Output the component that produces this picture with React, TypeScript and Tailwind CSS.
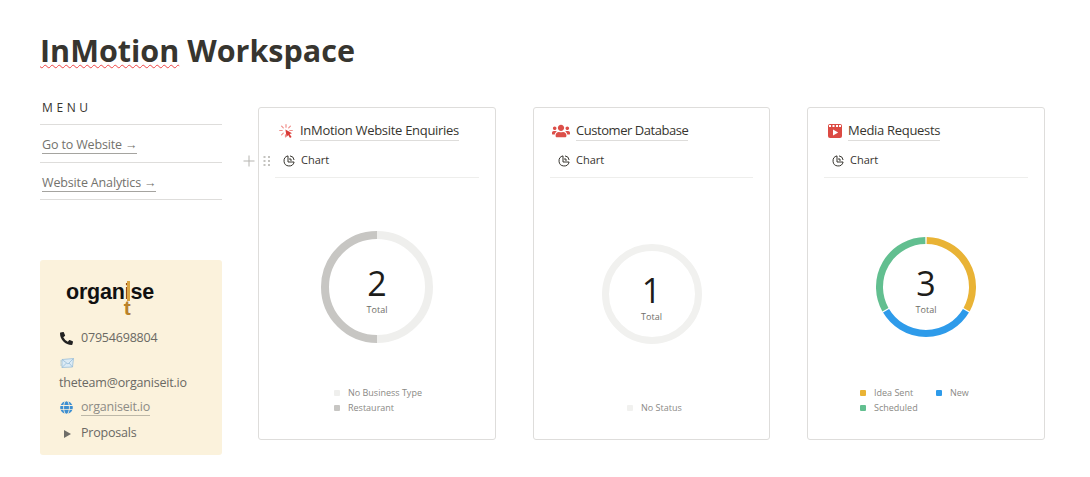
import { FaGlobe, FaPhoneAlt, FaUsers } from "react-icons/fa";

const FONT = "font-['Open_Sans','Noto_Sans',sans-serif]";

interface Slice {
  label: string;
  color: string;
  from: number;
  to: number;
}

interface DonutProps {
  size: number;
  stroke: number;
  total: number;
  slices: Slice[];
}

function polar(c: number, r: number, deg: number) {
  const a = ((deg - 90) * Math.PI) / 180;
  return `${c + r * Math.cos(a)} ${c + r * Math.sin(a)}`;
}

function Donut({ size, stroke, total, slices }: DonutProps) {
  const c = size / 2;
  const r = c - stroke / 2;

  return (
    <div className="relative shrink-0" style={{ width: size, height: size }}>
      <svg width={size} height={size} viewBox={`0 0 ${size} ${size}`}>
        {slices.map((s) =>
          s.to - s.from >= 360 ? (
            <circle key={s.label} cx={c} cy={c} r={r} fill="none" stroke={s.color} strokeWidth={stroke} />
          ) : (
            <path
              key={s.label}
              d={`M ${polar(c, r, s.from)} A ${r} ${r} 0 ${s.to - s.from > 180 ? 1 : 0} 1 ${polar(c, r, s.to)}`}
              fill="none"
              stroke={s.color}
              strokeWidth={stroke}
            />
          ),
        )}
      </svg>
      <div className="absolute inset-0 flex flex-col items-center justify-center pt-[7px]">
        <span className="text-[34px] leading-[34px] text-[#1d1d1b]">{total}</span>
        <span className="mt-[4px] text-[9px] leading-[12px] text-[#6f6e69]">Total</span>
      </div>
    </div>
  );
}

function ChartIcon() {
  return (
    <svg width="12" height="12" viewBox="0 0 12 12" fill="none" stroke="#37352f" strokeWidth="1" className="shrink-0">
      <path d="M5 .9A5.1 5.1 0 1 0 11.1 7H5Z" />
      <path d="M7 .9A4.6 4.6 0 0 1 11.1 5" />
      <path d="M7 3V5H9" />
    </svg>
  );
}

function ClickIcon() {
  return (
    <svg width="15" height="15" viewBox="0 0 15 15" className="shrink-0">
      <g stroke="#f08e8a" strokeWidth="1.2" strokeLinecap="round">
        <path d="M7 .7V3.2" />
        <path d="M.7 6.5H3.2" />
        <path d="M2.6 2.2 4.3 3.9" />
        <path d="M11.4 2.2 9.7 3.9" />
        <path d="M2.6 10.8 4.3 9.1" />
        <path d="M10.8 6.5H13.3" />
        <path d="M6.5 10.8V13" />
      </g>
      <path d="M6.4 5.6 13 9.2 10.6 10 12.6 13 11 14 9.2 11 7.6 13Z" fill="#d93a36" />
    </svg>
  );
}

function MediaIcon() {
  return (
    <svg width="14" height="14" viewBox="0 0 14 14" className="shrink-0">
      <rect width="14" height="14" rx="2" fill="#dc4a43" />
      <path d="M1 1h2v2H1zM4.5 1h2v2h-2zM8 1h2v2H8zM11 1h2v2h-2z" fill="#fff" />
      <path d="M5 5.5 10.2 8.5 5 11.5Z" fill="#fff" />
    </svg>
  );
}

function EnvelopeIcon() {
  return (
    <svg width="14" height="10" viewBox="0 0 14 10" className="shrink-0">
      <path d="M2 1.5 13.5 .5 12.5 9 2 9.5Z" fill="#dcebf5" stroke="#8fb8d6" strokeWidth=".7" />
      <path d="M2 1.5 8 6 13.5 .5M2 9.5 6.5 5M12.5 9 9 5" fill="none" stroke="#8fb8d6" strokeWidth=".7" />
      <path d="M0 3h2M0 5h1.5M0 7h2" stroke="#8fb8d6" strokeWidth=".6" />
    </svg>
  );
}

function Logo() {
  return (
    <div className="relative h-[37px] pl-[26px] pt-[20px] font-['Liberation_Sans',Arial,sans-serif] text-[21.5px] leading-[24px] font-bold text-[#111]">
      <span>organ</span>
      <span className="relative">
        i
        <span className="absolute left-[2px] top-[1px] h-[20px] w-[3px] bg-[#d9a441]"></span>
        <span className="absolute left-[-1px] top-[17px] text-[21px] leading-[22px] text-[#b9822a]">t</span>
      </span>
      <span>se</span>
    </div>
  );
}

interface CardProps {
  icon: React.ReactNode;
  title: string;
  titleClass: string;
  size: number;
  stroke: number;
  total: number;
  slices: Slice[];
  legend: React.ReactNode;
  chartClass: string;
  hover?: boolean;
}

function LegendItem({ slice }: { slice: Slice }) {
  return (
    <div className="flex h-[15px] items-center gap-[8px] whitespace-nowrap">
      <span className="h-[6px] w-[6px] rounded-[1px]" style={{ backgroundColor: slice.color }}></span>
      <span>{slice.label}</span>
    </div>
  );
}

function ChartCard({ icon, title, titleClass, size, stroke, total, slices, legend, chartClass, hover }: CardProps) {
  return (
    <section className="relative flex h-[333px] flex-col rounded-[3px] border border-[#dedddb] bg-white px-[16px]">
      {hover ? (
        <div className="absolute left-[-16px] top-[47px]">
          <svg width="12" height="12" viewBox="0 0 12 12" stroke="#b5b4b0" strokeWidth="1" className="absolute left-0 top-0">
            <path d="M6 .5v11M.5 6h11" />
          </svg>
          <svg width="8" height="12" viewBox="0 0 8 12" fill="#c4c3bf" className="absolute left-[20px] top-0">
            <rect x="0.5" y="1" width="2" height="2" />
            <rect x="5" y="1" width="2" height="2" />
            <rect x="0.5" y="5" width="2" height="2" />
            <rect x="5" y="5" width="2" height="2" />
            <rect x="0.5" y="9" width="2" height="2" />
            <rect x="5" y="9" width="2" height="2" />
          </svg>
        </div>
      ) : null}
      <div className="mt-[11px] flex h-[24px] items-center gap-[6px] pl-[4px]">
        {icon}
        <span className={`border-b border-[#dedddb] text-[13px] leading-[19px] font-[500] text-[#37352f] ${titleClass}`}>{title}</span>
      </div>
      <div className="flex h-[35px] items-center gap-[6px] border-b border-[#eeeeec] pl-[8px] pt-[1px] text-[11px] text-[#37352f]">
        <ChartIcon />
        <span>Chart</span>
      </div>
      <div className="flex min-h-0 flex-1 flex-col items-center">
        <div className={`flex items-center ${chartClass}`}>
          <Donut size={size} stroke={stroke} total={total} slices={slices} />
        </div>
        <div className="h-[42px] w-full text-[9px] text-[#8a8985]">{legend}</div>
      </div>
    </section>
  );
}

const businessSlices: Slice[] = [
  { label: "No Business Type", color: "#efefed", from: 0, to: 180 },
  { label: "Restaurant", color: "#c7c6c3", from: 180, to: 360 },
];
const statusSlices: Slice[] = [{ label: "No Status", color: "#f1f1ef", from: 0, to: 360 }];
const mediaSlices: Slice[] = [
  { label: "Idea Sent", color: "#e9b335", from: 0.8, to: 119.2 },
  { label: "New", color: "#2e9bea", from: 120.8, to: 239.2 },
  { label: "Scheduled", color: "#62bf90", from: 240.8, to: 359.2 },
];

export default function App() {
  return (
    <div className={`h-[477px] w-[1090px] overflow-hidden bg-white pl-[40px] pr-[45px] pt-[29px] ${FONT}`}>
      <h1 className="whitespace-nowrap text-[30.5px] leading-[42px] font-bold text-[#37352f]">
        <span className="underline decoration-[#ef4444] decoration-wavy decoration-1 underline-offset-[2px]">InMotion</span> Workspace
      </h1>
      <div className="mt-[36px] grid grid-cols-[181px_238px_237px_238px] gap-x-[37px]">
        <aside className="-mt-[8px] flex w-[182px] flex-col">
          <div className="box-content h-[18px] border-b border-[#dedddb] pb-[7px] pl-[2px] text-[12px] leading-[18px] tracking-[0.3em] text-[#37352f]">MENU</div>
          <div className="flex h-[38px] items-center border-b border-[#dedddb] pl-[2px] pt-[3px] text-[12.5px] tracking-[-0.15px] text-[#73726d]">
            <span className="border-b border-[#a5a4a0] leading-[17px]">Go to Website →</span>
          </div>
          <div className="flex h-[37px] items-center border-b border-[#dedddb] pl-[2px] pt-[3px] text-[12.5px] tracking-[-0.15px] text-[#73726d]">
            <span className="border-b border-[#a5a4a0] leading-[17px]">Website Analytics →</span>
          </div>
          <div className="mt-[60px] h-[195px] rounded-[3px] bg-[#fbf2dc] text-[12.5px] tracking-[-0.2px] text-[#6a6964]">
            <Logo />
            <div className="mt-[28px] flex h-[26px] items-center gap-[8px] pl-[20px]">
              <FaPhoneAlt className="h-[13px] w-[13px] text-[#222]" />
              <span>07954698804</span>
            </div>
            <div className="flex h-[20px] items-center pl-[20px] pt-[3px]">
              <EnvelopeIcon />
            </div>
            <div className="flex h-[23px] items-center pl-[19px] pt-[1px]">theteam@organiseit.io</div>
            <div className="mt-[1px] flex h-[24px] items-center gap-[8px] pl-[20px]">
              <FaGlobe className="h-[13px] w-[13px] text-[#3d8fd1]" />
              <span className="border-b border-[#bdb8a8] leading-[16px] text-[#8d8c86]">organiseit.io</span>
            </div>
            <div className="flex h-[27px] items-center gap-[10px] pl-[24px] pt-[2px]">
              <span className="h-0 w-0 border-y-[4px] border-l-[7px] border-y-transparent border-l-[#6f6e69]"></span>
              <span>Proposals</span>
            </div>
          </div>
        </aside>
        <ChartCard
          hover
          icon={<ClickIcon />}
          title="InMotion Website Enquiries"
          titleClass="tracking-[-0.3px]"
          size={112}
          stroke={8}
          total={2}
          slices={businessSlices}
          chartClass="h-[218px] -mb-[11px]"
          legend={
            <div className="flex flex-col pl-[59px]">
              <LegendItem slice={businessSlices[0]} />
              <LegendItem slice={businessSlices[1]} />
            </div>
          }
        />
        <ChartCard
          icon={<FaUsers className="-ml-[2px] h-[18px] w-[18px] shrink-0 text-[#dc4f49]" />}
          title="Customer Database"
          titleClass="tracking-[-0.45px]"
          size={100}
          stroke={7}
          total={1}
          slices={statusSlices}
          chartClass="h-[232px] -mb-[25px]"
          legend={
            <div className="flex flex-col pl-[77px] pt-[15px]">
              <LegendItem slice={statusSlices[0]} />
            </div>
          }
        />
        <ChartCard
          icon={<MediaIcon />}
          title="Media Requests"
          titleClass="tracking-[-0.3px]"
          size={100}
          stroke={7}
          total={3}
          slices={mediaSlices}
          chartClass="h-[218px] -mb-[11px]"
          legend={
            <div className="grid grid-cols-[76px_auto] pl-[36px]">
              <LegendItem slice={mediaSlices[0]} />
              <LegendItem slice={mediaSlices[1]} />
              <LegendItem slice={mediaSlices[2]} />
            </div>
          }
        />
      </div>
    </div>
  );
}
